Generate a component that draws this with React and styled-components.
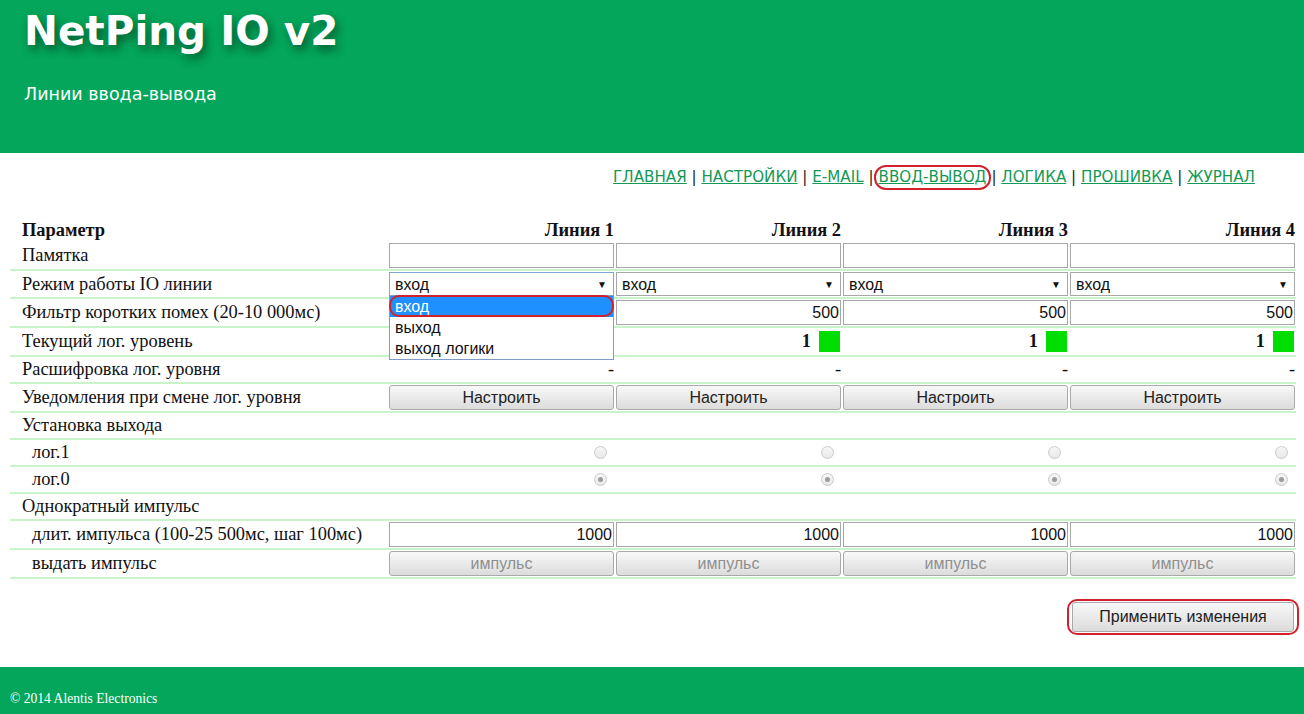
import React from 'react';
import styled, { createGlobalStyle } from 'styled-components';

const GREEN = '#03a65a';
const LINE = '#c9f4c9';
const RED = '#d2202c';

const Global = createGlobalStyle`
  html, body { margin: 0; padding: 0; background: #fff; }
  body {
    font-family: "Liberation Serif", "Times New Roman", serif;
    font-size: 18.4px;
    color: #111;
  }
`;

const Page = styled.div`
  display: flex;
  flex-direction: column;
  min-height: 714px;
`;

const Header = styled.header`
  background: ${GREEN};
  height: 153px;
  box-sizing: border-box;
  padding: 8px 0 0 24px;
  color: #fff;
`;

const Title = styled.h1`
  margin: 0;
  font-family: "DejaVu Sans", Verdana, sans-serif;
  font-weight: bold;
  font-size: 40.5px;
  line-height: 46px;
  text-shadow: 3px 5px 10px rgba(0, 0, 0, 0.45);
`;

const Subtitle = styled.div`
  margin-top: 30px;
  font-family: "DejaVu Sans", Verdana, sans-serif;
  font-size: 17.5px;
  line-height: 20px;
`;

const Main = styled.main`
  padding: 0 8px 0 10px;
  flex: 1;
`;

const Nav = styled.nav`
  margin-top: 12px;
  padding-right: 41px;
  text-align: right;
  line-height: 24px;
  height: 24px;
  font-family: "DejaVu Sans", Verdana, sans-serif;
  font-size: 15.15px;
  color: #222;
  white-space: pre;
`;

const NavLink = styled.a`
  color: #139955;
  text-decoration: underline;
  cursor: pointer;
`;

const ActiveLink = styled(NavLink)`
  display: inline-block;
  border: 2px solid ${RED};
  border-radius: 12px;
  padding: 0 3px;
  line-height: 21px;
`;

const Table = styled.div`
  margin-top: 30px;
  display: flex;
  flex-direction: column;
`;

const Row = styled.div`
  display: grid;
  grid-template-columns: 378px repeat(4, 227px);
  align-items: center;
  min-height: ${(p) => p.$h || 25}px;
  border-bottom: ${(p) => (p.$head ? 'none' : `2px solid ${LINE}`)};
`;

const Label = styled.div`
  padding-left: ${(p) => (p.$indent ? 22 : 12)}px;
  font-weight: ${(p) => (p.$bold ? 'bold' : 'normal')};
  line-height: 21px;
`;

const Cell = styled.div`
  position: relative;
  padding: 1px;
  display: flex;
  justify-content: flex-end;
  align-items: center;
  font-weight: ${(p) => (p.$bold ? 'bold' : 'normal')};
  line-height: 21px;
`;

const TextInput = styled.input`
  width: 100%;
  height: 25px;
  box-sizing: border-box;
  border: 1px solid #a8a8a8;
  padding: 0 1px;
  font-family: "Liberation Sans", Arial, sans-serif;
  font-size: 16px;
  text-align: right;
  color: #111;
  background: #fff;
  outline: none;
`;

const SelectBox = styled.div`
  position: relative;
  width: 100%;
  height: 24px;
  box-sizing: border-box;
  border: 1px solid ${(p) => (p.$focus ? '#7ea6d6' : '#a8a8a8')};
  padding: 0 6px 0 5px;
  display: flex;
  align-items: center;
  justify-content: space-between;
  font-family: "Liberation Sans", Arial, sans-serif;
  font-size: 16px;
  background: #fff;
`;

const Arrow = styled.span`
  font-size: 10px;
  color: #111;
`;

const DropList = styled.div`
  position: absolute;
  top: 100%;
  left: -1px;
  right: -1px;
  z-index: 10;
  background: #fff;
  border: 1px solid #7f9cc4;
  box-sizing: border-box;
  display: flex;
  flex-direction: column;
`;

const Option = styled.div`
  position: relative;
  height: 21px;
  line-height: 21px;
  padding-left: 5px;
  font-family: "Liberation Sans", Arial, sans-serif;
  font-size: 16px;
  color: ${(p) => (p.$active ? '#fff' : '#111')};
  background: ${(p) => (p.$active ? '#1e90ff' : '#fff')};
  ${(p) =>
    p.$active &&
    `
    &::after {
      content: '';
      position: absolute;
      inset: -1px -1px 0 -1px;
      border: 2px solid ${RED};
      border-radius: 10px;
    }
  `}
`;

const Lamp = styled.span`
  display: inline-block;
  width: 21px;
  height: 21px;
  margin-left: 8px;
  margin-right: 1px;
  background: #00dd00;
`;

const Radio = styled.span`
  position: relative;
  display: inline-block;
  width: 13px;
  height: 13px;
  margin-right: 7px;
  border-radius: 50%;
  box-sizing: border-box;
  border: 1px solid #cacaca;
  background: linear-gradient(#f7f7f7, #e8e8e8);
  ${(p) =>
    p.$checked &&
    `
    &::after {
      content: '';
      position: absolute;
      left: 3px; top: 3px;
      width: 5px; height: 5px;
      border-radius: 50%;
      background: #9c9c9c;
    }
  `}
`;

const Button = styled.button`
  width: ${(p) => (p.$w ? `${p.$w}px` : '100%')};
  height: ${(p) => p.$hgt || 25}px;
  box-sizing: border-box;
  border: 1px solid #a9a9a9;
  border-radius: 3px;
  background: linear-gradient(#f8f8f8, #dcdcdc);
  font-family: "Liberation Sans", Arial, sans-serif;
  font-size: 16px;
  color: ${(p) => (p.disabled ? '#8f8f8f' : '#222')};
  padding: 0;
`;

const ApplyBar = styled.div`
  margin-top: 20px;
  display: flex;
  justify-content: flex-end;
`;

const Ring = styled.div`
  border: 2px solid ${RED};
  border-radius: 10px;
  padding: 1px 3px;
  margin-right: -3px;
  display: flex;
`;

const Footer = styled.footer`
  margin-top: 32px;
  height: 47px;
  box-sizing: border-box;
  background: ${GREEN};
  color: #fff;
  padding: 24px 0 0 10px;
  font-size: 13.6px;
  line-height: 16px;
`;

const lines = [1, 2, 3, 4];

export default function App() {
  return (
    <Page>
      <Global />
      <Header>
        <Title>NetPing IO v2</Title>
        <Subtitle>Линии ввода-вывода</Subtitle>
      </Header>
      <Main>
        <Nav>
          <NavLink>ГЛАВНАЯ</NavLink>{' | '}
          <NavLink>НАСТРОЙКИ</NavLink>{' | '}
          <NavLink>E-MAIL</NavLink>{' |'}
          <ActiveLink>ВВОД-ВЫВОД</ActiveLink>{'| '}
          <NavLink>ЛОГИКА</NavLink>{' | '}
          <NavLink>ПРОШИВКА</NavLink>{' | '}
          <NavLink>ЖУРНАЛ</NavLink>
        </Nav>

        <Table>
          <Row $head $h={20}>
            <Label $bold>Параметр</Label>
            {lines.map((n) => (
              <Cell key={n} $bold>Линия {n}</Cell>
            ))}
          </Row>

          <Row $h={27}>
            <Label>Памятка</Label>
            {lines.map((n) => (
              <Cell key={n}><TextInput defaultValue="" /></Cell>
            ))}
          </Row>

          <Row $h={26}>
            <Label>Режим работы IO линии</Label>
            {lines.map((n) => (
              <Cell key={n}>
                <SelectBox $focus={n === 1}>
                  <span>вход</span>
                  <Arrow>▼</Arrow>
                  {n === 1 && (
                    <DropList>
                      <Option $active>вход</Option>
                      <Option>выход</Option>
                      <Option>выход логики</Option>
                    </DropList>
                  )}
                </SelectBox>
              </Cell>
            ))}
          </Row>

          <Row $h={27}>
            <Label>Фильтр коротких помех (20-10 000мс)</Label>
            {lines.map((n) => (
              <Cell key={n}><TextInput defaultValue="500" /></Cell>
            ))}
          </Row>

          <Row $h={27}>
            <Label>Текущий лог. уровень</Label>
            {lines.map((n) => (
              <Cell key={n} $bold>1<Lamp /></Cell>
            ))}
          </Row>

          <Row $h={25}>
            <Label>Расшифровка лог. уровня</Label>
            {lines.map((n) => (
              <Cell key={n}>-</Cell>
            ))}
          </Row>

          <Row $h={27}>
            <Label>Уведомления при смене лог. уровня</Label>
            {lines.map((n) => (
              <Cell key={n}><Button>Настроить</Button></Cell>
            ))}
          </Row>

          <Row $h={25}>
            <Label>Установка выхода</Label>
          </Row>

          <Row $h={25}>
            <Label $indent>лог.1</Label>
            {lines.map((n) => (
              <Cell key={n}><Radio /></Cell>
            ))}
          </Row>

          <Row $h={25}>
            <Label $indent>лог.0</Label>
            {lines.map((n) => (
              <Cell key={n}><Radio $checked /></Cell>
            ))}
          </Row>

          <Row $h={25}>
            <Label>Однократный импульс</Label>
          </Row>

          <Row $h={27}>
            <Label $indent>длит. импульса (100-25 500мс, шаг 100мс)</Label>
            {lines.map((n) => (
              <Cell key={n}><TextInput defaultValue="1000" /></Cell>
            ))}
          </Row>

          <Row $h={27}>
            <Label $indent>выдать импульс</Label>
            {lines.map((n) => (
              <Cell key={n}><Button disabled>импульс</Button></Cell>
            ))}
          </Row>
        </Table>

        <ApplyBar>
          <Ring>
            <Button $w={222} $hgt={30}>Применить изменения</Button>
          </Ring>
        </ApplyBar>
      </Main>
      <Footer>© 2014 Alentis Electronics</Footer>
    </Page>
  );
}
